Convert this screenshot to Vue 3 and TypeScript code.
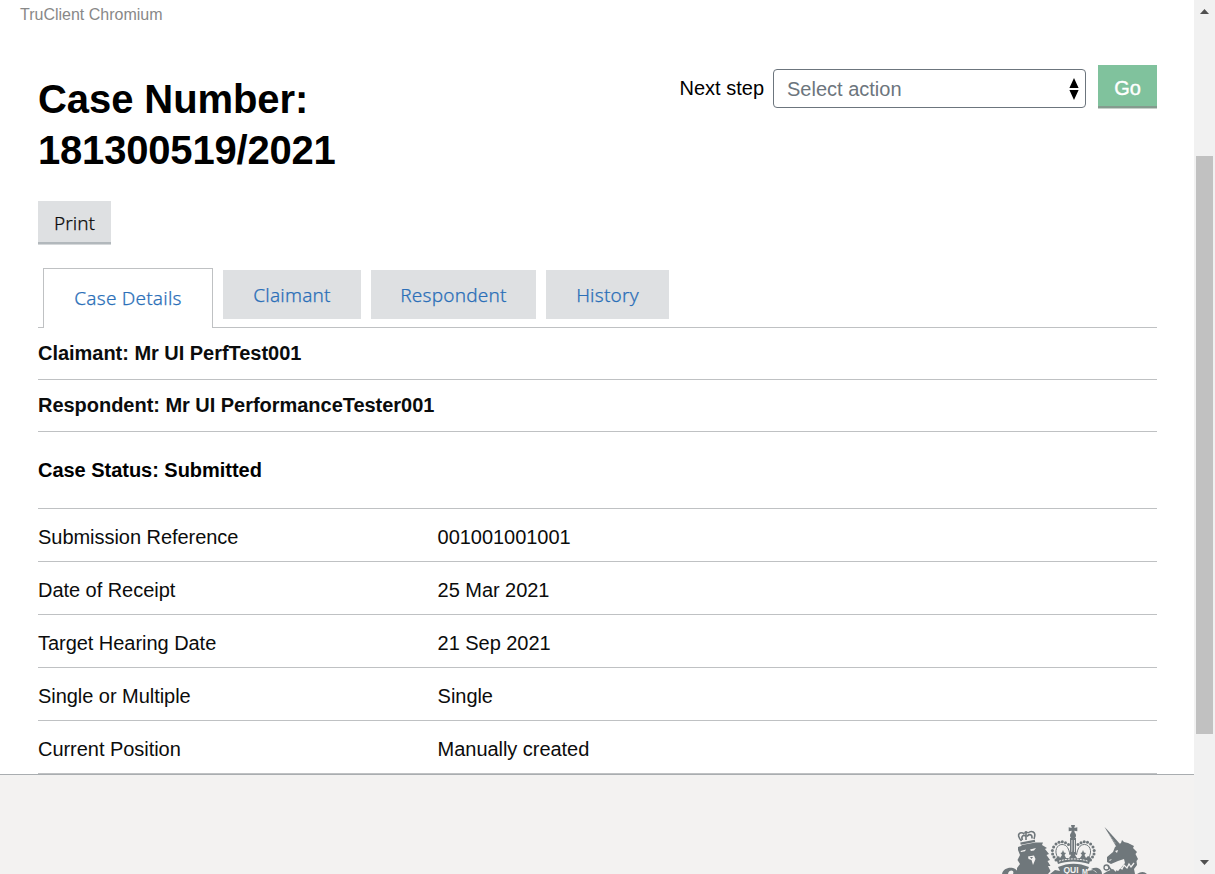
<script setup lang="ts">
interface Detail {
  label: string
  value: string
}

interface Tab {
  label: string
  width: number
}

const tabs: Tab[] = [
  { label: 'Case Details', width: 170 },
  { label: 'Claimant', width: 138 },
  { label: 'Respondent', width: 165 },
  { label: 'History', width: 123 },
]

const details: Detail[] = [
  { label: 'Submission Reference', value: '001001001001' },
  { label: 'Date of Receipt', value: '25 Mar 2021' },
  { label: 'Target Hearing Date', value: '21 Sep 2021' },
  { label: 'Single or Multiple', value: 'Single' },
  { label: 'Current Position', value: 'Manually created' },
]

// Beads along the two arches of the royal crown
const beads: number[][] = [
  [56, 40], [54, 37], [52.6, 34], [52.4, 30.5], [53.6, 27], [56, 24], [59, 22.3], [62.3, 21.8], [65.5, 22.8], [68.5, 24.5],
  [90.5, 40], [92.5, 37], [94, 34], [94.2, 30.5], [93, 27], [90.6, 24], [87.5, 22.3], [84.2, 21.8], [81, 22.8], [78, 24.5],
]
</script>

<template>
  <div class="window">
    <div class="page">
      <div class="phase">TruClient Chromium</div>
      <main class="content">
        <header class="top">
          <h1>Case Number: <span class="number">181300519/2021</span></h1>
          <form class="action" @submit.prevent>
            <label>Next step</label>
            <div class="select">
              <span>Select action</span>
              <svg width="10" height="22" viewBox="0 0 10 22">
                <path d="M5 0 9.6 10H.4ZM.4 12H9.6L5 22Z" fill="#000" />
              </svg>
            </div>
            <button class="go" type="button">Go</button>
          </form>
        </header>
        <button class="print" type="button">Print</button>
        <nav class="tabs">
          <a
            v-for="(tab, i) in tabs"
            :key="tab.label"
            class="tab"
            :class="{ active: i === 0 }"
            :style="{ width: tab.width + 'px' }"
          >{{ tab.label }}</a>
        </nav>
        <h2 class="party">Claimant: Mr UI PerfTest001</h2>
        <h2 class="party">Respondent: Mr UI PerformanceTester001</h2>
        <h2 class="status">Case Status: Submitted</h2>
        <dl>
          <div v-for="d in details" :key="d.label" class="row">
            <dt>{{ d.label }}</dt>
            <dd>{{ d.value }}</dd>
          </div>
        </dl>
      </main>
      <footer>
        <svg class="crest" width="150" height="54" viewBox="0 0 150 54" fill="#6f777b">
          <!-- lion's crown -->
          <g fill="none" stroke="#6f777b" stroke-width="1.6">
            <path d="M21.500 21C15 13 21 11.500 24.500 14M34 19C37 11 31 10.500 28 13M22.500 20C20.500 16 24 14 26 16.500M32 18.500C32.500 14 29 13.500 27 16.500" />
            <path d="M26 11V20M24.300 12.500H28" />
            <path d="M20.500 23.600 35 20.800" stroke-width="2.200" />
          </g>
          <!-- lion -->
          <path d="M18 27 21 26 22 25 35.500 22.500 43 22.500 42 25 47 28 45 29 49 34 46.500 35 50 40 47.500 41 50.500 46 48 46 50.500 51 48 54H17V48L20 44 17.500 40 20 35 18 30Z" />
          <path d="M20.500 31 26 29.500 25 31.300 21 32ZM30 29.500 36 28 34 30.500 31 31ZM28 36.500 34 35.500 35.500 39 33 45 31.500 40 28.500 39Z" fill="#f3f2f1" />
          <path d="M30 37 33 37 31.500 39Z" />
          <path d="M2 54C3 49 8 47 13 48 19 50 18 54 17 54H13C15 50 9 49 8 54Z" />
          <!-- royal crown -->
          <path d="M71 5h4l-.7 3 3-.7v4l-3-.6.7 3h-4l.7-3-3 .6v-4l3 .7z" />
          <circle cx="73" cy="15.500" r="3" />
          <circle v-for="(b, i) in beads" :key="i" :cx="b[0]" :cy="b[1]" r="1.500" />
          <path d="M58 38C53.500 31 57 24.500 62 24.500 67 24.500 69 29 70 35M88.500 38C93 31 89.500 24.500 84.500 24.500 79.500 24.500 77.500 29 76.500 35" fill="none" stroke="#6f777b" stroke-width="1" />
          <path d="M70 18h6v15l-1 2h-4l-1-2z" />
          <path d="M71.500 20h.8v12h-.8zM74 20h.8v12h-.8z" fill="#f3f2f1" />
          <path d="M56 38 59 36 60 38 62 35 60.500 33 62 32.500 63 30 64 32.500 66 33 64.500 35 66 38 69 38 71 35 69 33 72 32.500 73 30 74 32.500 77 33 75 35 77 38 80 38 82 35 80.500 33 82 32.500 83 30 84 32.500 86 33 84.500 35 86 38 88 36 91 38 89 44C80 40.500 66 40.500 58 44Z" />
          <path d="M59 41.200C68 38.200 79 38.200 88 41.200" fill="none" stroke="#f3f2f1" stroke-width="1" stroke-dasharray="2 1" />
          <!-- garter -->
          <path d="M50 54 55 50 60 51 58 47C68 42.500 79 42.500 89 47L87 51 93 50 98 54Z" />
          <g fill="#f3f2f1" font-family="Liberation Sans, Arial, sans-serif" font-weight="700" font-size="8.500">
            <text x="63.500" y="53">QUI</text>
            <text x="82" y="53.500" font-size="7">M</text>
          </g>
          <path d="M91 49C97 46 102 49 102 54H97C97 51 93 50 91 49Z" />
          <!-- unicorn -->
          <path d="M104.500 7 107 9.500 120 24 116.500 27Z" />
          <path d="M107.500 12.500 116 24" stroke="#f3f2f1" stroke-width=".5" stroke-dasharray="1 1" />
          <path d="M115 27 121 23 122 20 124 22 128 23 134 26 133 28 137 32 135.500 34 138 39 136.500 41 137 45 134 49 135 54H113L120 49 125 43 124 39 118 41 111 44 107 42 107 37 113 32Z" />
          <path d="M115 31 118 30 117 33ZM109 40 112 39 110 41Z" fill="#f3f2f1" />
          <path d="M108 46 113 52M116 51C124 54 132 49 135 45" fill="none" stroke="#6f777b" stroke-width="1.600" />
          <path d="M114 48 118 50 119 46 122 49 124 45 127 48 129 44 131 47 134 43" fill="none" stroke="#f3f2f1" stroke-width="1.300" />
          <circle cx="106.500" cy="47.500" r="2.500" fill="none" stroke="#6f777b" stroke-width="1.300" />
          <path d="M103 54 107 51.500 113 49 118 54ZM137 54Q143 50 147 54Z" />
        </svg>
      </footer>
    </div>
    <aside class="scrollbar">
      <svg width="9" height="5" viewBox="0 0 9 5"><path d="M4.500 0 9 5H0Z" fill="#505050" /></svg>
      <div class="thumb"></div>
      <svg class="down" width="9" height="5" viewBox="0 0 9 5"><path d="M0 0H9L4.500 5Z" fill="#505050" /></svg>
    </aside>
  </div>
</template>

<style>
body {
  margin: 0;
  overflow: hidden;
}
</style>

<style scoped>
.window {
  display: flex;
  width: 1215px;
  height: 874px;
  overflow: hidden;
  background: #fff;
  color: #0b0c0c;
  font: 20px/25px "Liberation Sans", Arial, sans-serif;
}
.page {
  width: 1194px;
  display: flex;
  flex-direction: column;
}
.phase {
  height: 65px;
  padding: 5px 0 0 20px;
  box-sizing: border-box;
  color: #888;
  font-size: 16px;
  line-height: 20px;
}
.content {
  height: 709px;
  box-sizing: border-box;
  padding: 0 37px 0 38px;
}
.top {
  display: flex;
  justify-content: space-between;
  align-items: flex-start;
  height: 136px;
}
h1 {
  width: 360px;
  margin: 9px 0 0;
  color: #000;
  font-size: 40px;
  line-height: 51px;
  font-weight: 700;
  letter-spacing: -0.08px;
}
.number {
  letter-spacing: -0.19px;
}
.action {
  display: flex;
  align-items: flex-start;
  color: #000;
}
.action label {
  margin: 11px 9px 0 0;
}
.select {
  display: flex;
  align-items: center;
  justify-content: space-between;
  width: 313px;
  height: 39px;
  box-sizing: border-box;
  margin: 4px 12px 0 0;
  padding: 0 6px 0 13px;
  border: 1px solid #6c757d;
  border-radius: 4px;
  color: #6c757d;
}
.select span {
  padding-top: 2px;
}
button {
  display: block;
  margin: 0;
  border: 0;
  padding: 0;
}
.go {
  width: 59px;
  height: 44px;
  padding-top: 2px;
  background: #80c29d;
  box-shadow: inset 0 -1px #c7cfca, inset 0 -3px #849b8e;
  color: #fff;
  font: 20px/42px "Liberation Sans", Arial, sans-serif;
  -webkit-text-stroke: 0.4px #fff;
}
.print {
  width: 73px;
  height: 44px;
  background: #dee0e2;
  box-shadow: inset 0 -1px #d5d8da, inset 0 -3px #b2b8bc;
  color: #0b0c0c;
  font: 300 19px/44px "Noto Sans", sans-serif;
  -webkit-text-stroke: 0.25px #0b0c0c;
}
.tabs {
  display: flex;
  align-items: flex-start;
  gap: 10px;
  height: 60px;
  box-sizing: border-box;
  margin-top: 23px;
  padding-left: 5px;
  border-bottom: 1px solid #bfc1c3;
}
.tab {
  height: 49px;
  box-sizing: border-box;
  margin-top: 2px;
  background: #dee0e2;
  color: #2b6fb8;
  font: 300 19px/50px "Noto Sans", sans-serif;
  letter-spacing: 0.22px;
  text-align: center;
  white-space: nowrap;
  -webkit-text-stroke: 0.25px #2b6fb8;
}
.tab.active {
  height: 60px;
  margin-top: 0;
  border: 1px solid #bfc1c3;
  border-bottom: 0;
  background: #fff;
  line-height: 59px;
}
h2 {
  margin: 0;
  border-bottom: 1px solid #bfc1c3;
  font-size: 20px;
  font-weight: 700;
  letter-spacing: -0.03px;
}
.party {
  height: 51px;
  line-height: 50px;
}
.status {
  height: 76px;
  color: #000;
  line-height: 76px;
}
dl {
  margin: 0;
  letter-spacing: -0.04px;
}
.row {
  display: flex;
  height: 52px;
  border-bottom: 1px solid #bfc1c3;
  line-height: 57px;
}
dt {
  width: 399.6px;
}
dd {
  margin: 0;
}
footer {
  display: flex;
  justify-content: flex-end;
  height: 100px;
  box-sizing: border-box;
  padding: 45px 44px 0 0;
  border-top: 1px solid #a9adb0;
  background: #f3f2f1;
}
.scrollbar {
  display: flex;
  flex-direction: column;
  align-items: center;
  width: 21px;
  box-sizing: border-box;
  padding: 9px 2px 9px;
  background: #f1f1f1;
}
.thumb {
  width: 17px;
  height: 578px;
  margin-top: 142px;
  background: #c1c1c1;
}
.down {
  margin-top: auto;
}
</style>
